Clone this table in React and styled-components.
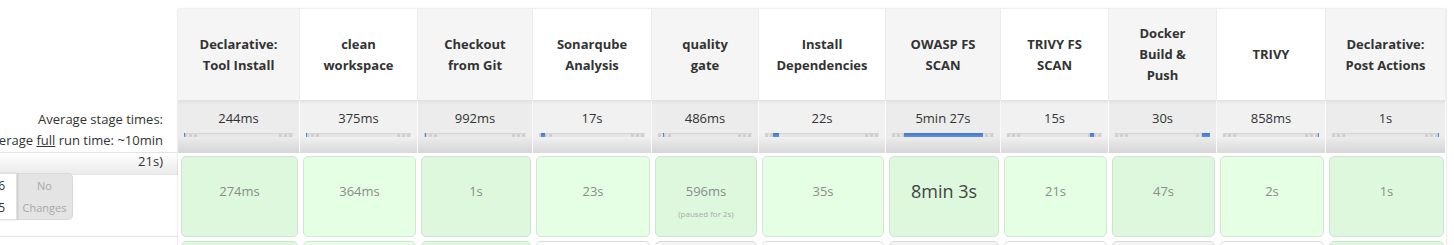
import React from 'react';
import styled, { createGlobalStyle, css } from 'styled-components';

const Global = createGlobalStyle`
  html, body { margin: 0; padding: 0; background: #fff; }
  body { font-family: "Open Sans", "Noto Sans", Arial, sans-serif; color: #333; }
`;

const stages = [
  { name: ['Declarative:', 'Tool Install'], width: 122, avg: '244ms', bl: 0, bw: 0.5, run: '274ms', next: 'success' },
  { name: ['clean', 'workspace'], width: 118, avg: '375ms', bl: 0, bw: 0.5, run: '364ms', next: 'success' },
  { name: ['Checkout', 'from Git'], width: 115, avg: '992ms', bl: 0.5, bw: 0.5, run: '1s', next: 'success' },
  { name: ['Sonarqube', 'Analysis'], width: 119, avg: '17s', bl: 2, bw: 4, run: '23s', next: 'idle' },
  { name: ['quality', 'gate'], width: 107, avg: '486ms', bl: 5, bw: 0.5, run: '596ms', paused: '(paused for 2s)', next: 'idle' },
  { name: ['Install', 'Dependencies'], width: 127, avg: '22s', bl: 7, bw: 5.5, run: '35s', next: 'idle' },
  { name: ['OWASP FS', 'SCAN'], width: 115, avg: '5min 27s', bl: 12, bw: 77, run: '8min 3s', long: true, next: 'idle' },
  { name: ['TRIVY FS', 'SCAN'], width: 108, avg: '15s', bl: 87.5, bw: 4, run: '21s', next: 'idle' },
  { name: ['Docker', 'Build &', 'Push'], width: 108, avg: '30s', bl: 91.5, bw: 8.5, run: '47s', next: 'idle' },
  { name: ['TRIVY'], width: 109, avg: '858ms', bl: 98.5, bw: 0.5, run: '2s', next: 'idle' },
  { name: ['Declarative:', 'Post Actions'], width: 120, avg: '1s', bl: 99, bw: 1, run: '1s', next: 'success' },
];

const Viewport = styled.div`
  width: 100%;
  height: 245px;
  overflow: hidden;
`;

const Board = styled.div`
  display: flex;
  align-items: flex-start;
  margin-left: -60px;
  padding-top: 9px;
`;

const LeftColumn = styled.div`
  width: 238px;
  flex: none;
`;

const LeftHead = styled.div`
  height: 92px;
`;

const LeftAvg = styled.div`
  height: 52px;
  border-bottom: 1px solid #e4e4e4;
  padding: 8px 15px 0 0;
  box-sizing: border-box;
  text-align: right;
  font-size: 13px;
  line-height: 21px;
  color: #333;
  white-space: nowrap;
  position: relative;
  z-index: 2;
  u { text-decoration: underline; }
`;

const LeftBuild = styled.div`
  height: 84px;
  border-bottom: 1px solid #e6e6e6;
  background: linear-gradient(to bottom, #ffffff 0px, #ebebeb 21px, #dddddd 22px, #ffffff 22px, #ffffff 100%);
  padding-top: 20px;
  box-sizing: border-box;
`;

const BadgeRow = styled.div`
  display: flex;
  align-items: stretch;
  height: 47px;
`;

const DateBox = styled.div`
  width: 77px;
  box-sizing: border-box;
  background: #fff;
  border: 1px solid #e0e0e0;
  border-left: none;
  box-shadow: 1px 0 2px rgba(0, 0, 0, 0.12);
  text-align: right;
  padding: 1px 11px 0 0;
  font-size: 12px;
  line-height: 22px;
  color: #333;
  position: relative;
  z-index: 1;
`;

const ChangesBox = styled.div`
  width: 56px;
  box-sizing: border-box;
  background: #e4e4e4;
  border: 1px solid #d8d8d8;
  border-left: none;
  border-radius: 0 5px 5px 0;
  text-align: center;
  padding-top: 1px;
  font-size: 11px;
  line-height: 22px;
  color: #a8a8a8;
`;

const StageGrid = styled.div`
  display: grid;
  grid-template-columns: ${(p) => p.$cols};
  flex: none;
  background: #fff;
  box-shadow: 0 0 2px rgba(0, 0, 0, 0.2);
`;

const HeaderCell = styled.div`
  height: 92px;
  box-sizing: border-box;
  display: flex;
  align-items: center;
  justify-content: center;
  text-align: center;
  font-weight: 700;
  font-size: 13px;
  line-height: 21px;
  color: #333;
  background: ${(p) => (p.$alt ? '#f5f5f5' : '#ffffff')};
  border-right: 1px solid #ececec;
  border-bottom: 1px solid #e2e2e2;
`;

const AvgCell = styled.div`
  height: 52px;
  box-sizing: border-box;
  padding: 7px 6px 0 6px;
  text-align: center;
  font-size: 13px;
  line-height: 21px;
  color: #333;
  border-right: 1px solid #fafafa;
  background: ${(p) =>
    p.$alt
      ? 'linear-gradient(to bottom, #e2e2e2 0px, #ececec 4px, #ececec 36px, #d6d6d6 51px)'
      : 'linear-gradient(to bottom, #e6e6e6 0px, #f1f1f1 4px, #f1f1f1 36px, #dadada 51px)'};
`;

const Bar = styled.div`
  position: relative;
  height: 4px;
  margin-top: 4px;
  background: linear-gradient(to bottom, #d4d4d4 0px, #d4d4d4 1px, #e6e6e6 1px, #e6e6e6 100%);
  &::before,
  &::after {
    content: '';
    position: absolute;
    top: 1px;
    height: 3px;
    width: 14px;
    background: repeating-linear-gradient(90deg, #d0d0d0 0px, #d0d0d0 3px, #e4e4e4 3px, #e4e4e4 5px);
  }
  &::before { left: 0; }
  &::after { right: 0; }
`;

const BarFill = styled.div`
  position: absolute;
  top: 0;
  bottom: 0;
  left: ${(p) => p.$left}%;
  width: ${(p) => p.$width}%;
  min-width: 1px;
  background: linear-gradient(to bottom, #4079cf, #5e90dd);
  z-index: 1;
`;

const RunCell = styled.div`
  padding: ${(p) => (p.$next ? '3px 2px 0 3px' : '3px 2px 1px 3px')};
`;

const cardTone = css`
  ${(p) =>
    p.$status === 'success'
      ? css`
          background: ${p.$alt ? '#ddf8dd' : '#e4ffe4'};
          border-color: ${p.$alt ? '#cfe3cf' : '#d3e6d3'};
        `
      : css`
          background: ${p.$alt ? '#f5f5f5' : '#ffffff'};
          border-color: #d9d9d9;
        `}
`;

const Card = styled.div`
  height: 81px;
  box-sizing: border-box;
  border: 1px solid;
  border-radius: 5px;
  ${cardTone}
  text-align: center;
  padding-top: 24px;
  font-size: 13px;
  line-height: 20px;
  color: #8c8c8c;
`;

const LongDuration = styled.span`
  font-size: 18px;
  color: #444;
  line-height: 20px;
`;

const Paused = styled.div`
  margin-top: 7px;
  font-size: 8px;
  line-height: 12px;
  color: #aaa;
`;

export default function App() {
  const cols = stages.map((s) => `${s.width}px`).join(' ');
  return (
    <Viewport>
      <Global />
      <Board>
        <LeftColumn>
          <LeftHead />
          <LeftAvg>
            Average stage times:
            <br />
            (Average <u>full</u> run time: ~10min
            <br />
            21s)
          </LeftAvg>
          <LeftBuild>
            <BadgeRow>
              <DateBox>
                Jun 06
                <br />
                14:35
              </DateBox>
              <ChangesBox>
                No
                <br />
                Changes
              </ChangesBox>
            </BadgeRow>
          </LeftBuild>
        </LeftColumn>
        <StageGrid $cols={cols}>
          {stages.map((s, i) => (
            <HeaderCell key={`h${i}`} $alt={i % 2 === 0}>
              <span>
                {s.name.map((line, j) => (
                  <React.Fragment key={j}>
                    {j > 0 && <br />}
                    {line}
                  </React.Fragment>
                ))}
              </span>
            </HeaderCell>
          ))}
          {stages.map((s, i) => (
            <AvgCell key={`a${i}`} $alt={i % 2 === 0}>
              {s.avg}
              <Bar>
                <BarFill $left={s.bl} $width={s.bw} />
              </Bar>
            </AvgCell>
          ))}
          {stages.map((s, i) => (
            <RunCell key={`r${i}`}>
              <Card $status="success" $alt={i % 2 === 0}>
                {s.long ? <LongDuration>{s.run}</LongDuration> : s.run}
                {s.paused && <Paused>{s.paused}</Paused>}
              </Card>
            </RunCell>
          ))}
          {stages.map((s, i) => (
            <RunCell key={`n${i}`} $next>
              <Card $status={s.next} $alt={i % 2 === 0} />
            </RunCell>
          ))}
        </StageGrid>
      </Board>
    </Viewport>
  );
}
